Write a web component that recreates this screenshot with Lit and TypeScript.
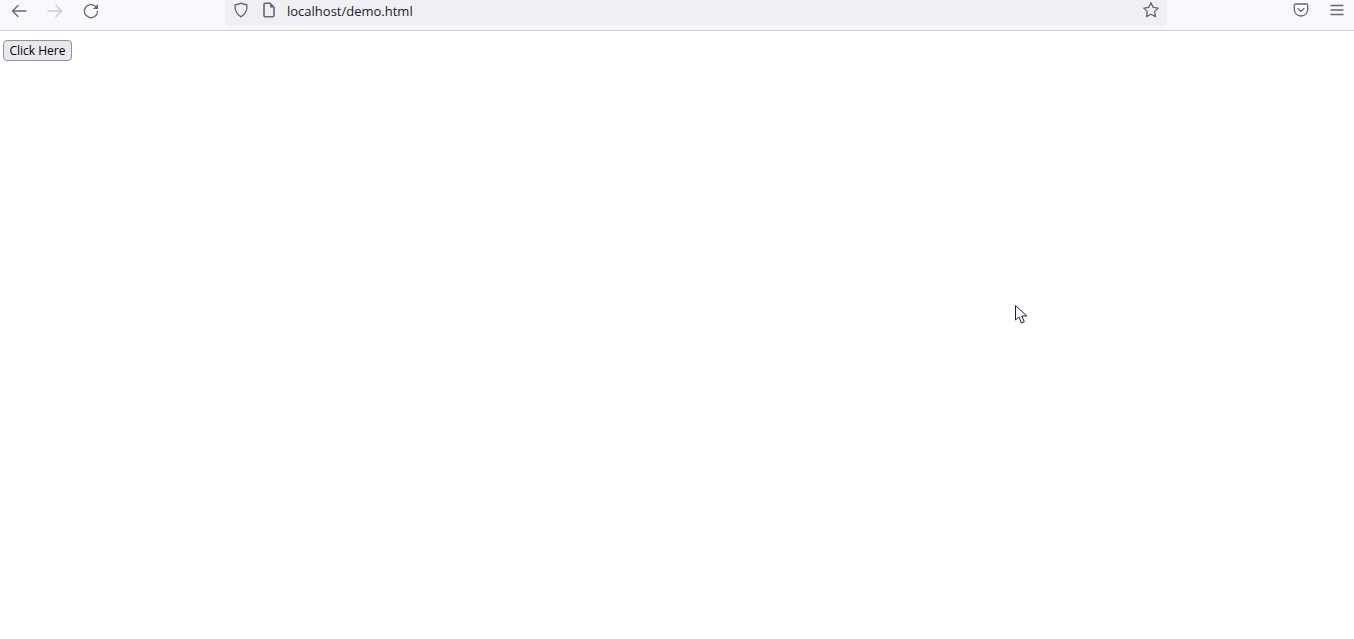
import { html, css, LitElement, svg } from 'lit';
import { customElement } from 'lit/decorators.js';

const icon = (body: unknown, cls = '') => html`<svg class="icon ${cls}" viewBox="0 0 16 16" fill="none" stroke="currentColor" stroke-width="1.3" stroke-linecap="round" stroke-linejoin="round">${body}</svg>`;

@customElement('app-root')
export class AppRoot extends LitElement {
  static styles = css`
    :host {
      display: block;
      position: relative;
      height: 639px;
      overflow: hidden;
      background: #fff;
      font-family: 'Segoe UI', 'Open Sans', 'Noto Sans', sans-serif;
    }
    .toolbar {
      display: flex;
      align-items: flex-start;
      height: 30px;
      background: #f9f9fb;
      border-bottom: 1px solid #cfcfd3;
      color: #6a6570;
    }
    .icon {
      width: 16px;
      height: 16px;
      flex: none;
    }
    .nav {
      display: flex;
      gap: 20px;
      padding: 3px 0 0 11px;
      width: 225px;
      box-sizing: border-box;
    }
    .disabled {
      color: #c8c8cc;
    }
    .urlbar {
      width: 942px;
      height: 26px;
      background: #f0f0f4;
      border-radius: 0 0 4px 4px;
      display: flex;
      align-items: flex-start;
      padding: 2px 8px 0 8px;
      box-sizing: border-box;
    }
    .page {
      margin-left: 12px;
      stroke-width: 1.6;
    }
    .url {
      margin-left: 10px;
      flex: 1;
      font-size: 13px;
      line-height: 18px;
      color: #20202a;
    }
    .right {
      display: flex;
      gap: 20px;
      padding: 2px 0 0 126px;
    }
    .content {
      padding: 9px 3px;
    }
    button {
      display: block;
      width: 69px;
      height: 21px;
      padding: 0;
      font: 12px/18px 'Segoe UI', 'Open Sans', 'Noto Sans', sans-serif;
      color: #000;
      background: #e9e9ed;
      border: 1px solid #8f8f9d;
      border-radius: 4px;
    }
    .cursor {
      position: absolute;
      left: 1015px;
      top: 305px;
      width: 13px;
      height: 20px;
    }
  `;

  render() {
    return html`
      <div class="toolbar">
        <div class="nav">
          ${icon(svg`<path d="M15 8H1.500M7 2.500 1.500 8 7 13.500"/>`)}
          ${icon(svg`<path d="M1 8h13.500M9 2.500 14.500 8 9 13.500"/>`, 'disabled')}
          ${icon(svg`<path d="M14.600 8.500a6.600 6.600 0 1 1-2-5.100l2 2"/><path d="M15 1v5h-5z" fill="currentColor" stroke="none"/>`)}
        </div>
        <div class="urlbar">
          ${icon(svg`<path d="M8 1.200c2 1 3.900 1.500 6 1.600.2 5.600-1.800 9.800-6 12-4.200-2.200-6.200-6.400-6-12 2.100-.1 4-.6 6-1.600z"/>`)}
          ${icon(svg`<path d="M3 2.600c0-.8.500-1.300 1.300-1.300h4.700L13 5.300v8.100c0 .8-.5 1.300-1.300 1.300H4.300c-.8 0-1.300-.5-1.300-1.300z"/><path d="M9 1.500 13 5.500H9z" fill="currentColor" stroke="none"/>`, 'page')}
          <div class="url">localhost/demo.html</div>
          ${icon(svg`<path d="m8 .7 2.200 4.700 5 .7-3.600 3.500.9 5L8 12.200l-4.500 2.400.9-5L.8 6.100l5-.7z"/>`)}
        </div>
        <div class="right">
          ${icon(svg`<path d="M2.500 2h11c.7 0 1.200.5 1.200 1.200v4.300A6.600 6.600 0 0 1 8 14a6.600 6.600 0 0 1-6.700-6.500V3.200C1.300 2.500 1.800 2 2.500 2z"/><path d="m5 6.500 3 3 3-3" stroke-width="1.100"/>`)}
          ${icon(svg`<path d="M2 3.500h12M2 8h12M2 12.500h12"/>`)}
        </div>
      </div>
      <div class="content"><button>Click Here</button></div>
      <svg class="cursor" viewBox="0 0 13 20">
        <path d="M.5.500v14.500l3.500-3 2.500 6 2.800-1.200-2.500-5.800h5z" fill="#fff" stroke="#1c1840" stroke-width="1"/>
      </svg>
    `;
  }
}
